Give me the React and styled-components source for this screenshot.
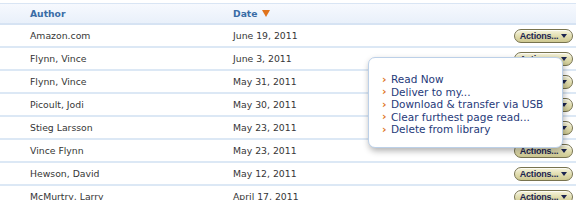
import React from "react";
import styled, { createGlobalStyle } from "styled-components";

const Global = createGlobalStyle`
  html, body { margin: 0; padding: 0; background: #fff; }
  body { font-family: "DejaVu Sans", Verdana, sans-serif; }
`;

const Page = styled.div`
  position: relative;
  width: 576px;
  height: 200px;
  overflow: hidden;
  padding-top: 3px;
  box-sizing: border-box;
`;

const Grid = styled.div`
  display: grid;
  grid-template-columns: 233px 1fr 80px;
`;

const Header = styled(Grid)`
  height: 19px;
  border-top: 1px solid #d9e5f4;
  border-bottom: 2px solid #d6e3f3;
  background: linear-gradient(#f6f9fe, #e9f0fa);
  align-items: center;
`;

const HeadCell = styled.div`
  padding-left: ${(p) => p.$pl || 0}px;
  font-weight: bold;
  font-size: 9.2px;
  color: #3a6ca6;
  display: flex;
  align-items: center;
  gap: 5px;
`;

const SortArrow = styled.span`
  width: 0;
  height: 0;
  border-left: 4px solid transparent;
  border-right: 4px solid transparent;
  border-top: 7px solid #e0731c;
`;

const Row = styled(Grid)`
  height: 21px;
  border-bottom: 2px solid #dce8f5;
  align-items: center;
  font-size: 9.3px;
  color: #363636;
`;

const Cell = styled.div`
  padding-left: ${(p) => p.$pl || 0}px;
  white-space: nowrap;
`;

const ActionCell = styled.div`
  display: flex;
  justify-content: flex-end;
  padding-right: 3px;
`;

const ActionButton = styled.div`
  width: 59px;
  height: 14px;
  box-sizing: border-box;
  border: 1px solid #77734f;
  border-radius: 7px;
  background: linear-gradient(#f6f4de, #e2deb0 50%, #cdc891);
  box-shadow: inset 0 1px 0 rgba(255, 255, 255, 0.7);
  display: flex;
  align-items: center;
  justify-content: center;
  gap: 3px;
  font-family: "Liberation Sans", Arial, sans-serif;
  font-weight: bold;
  font-size: 9px;
  color: #1c2450;
  letter-spacing: -0.2px;
`;

const Caret = styled.span`
  width: 0;
  height: 0;
  border-left: 3px solid transparent;
  border-right: 3px solid transparent;
  border-top: 4px solid #1c2450;
`;

const Popup = styled.div`
  position: absolute;
  left: 368px;
  top: 57px;
  width: 195px;
  height: 91px;
  box-sizing: border-box;
  background: #fff;
  border: 1px solid #bcd0e8;
  border-radius: 7px;
  box-shadow: 1px 3px 6px rgba(0, 0, 0, 0.3);
  padding: 15px 0 0 13px;
`;

const Item = styled.div`
  display: flex;
  align-items: center;
  height: 12.5px;
  font-size: 10.5px;
  color: #1f3a7a;
  white-space: nowrap;
`;

const Bullet = styled.span`
  color: #e0731c;
  font-weight: bold;
  font-size: 11px;
  width: 9px;
  line-height: 1;
`;

const rows = [
  ["Amazon.com", "June 19, 2011"],
  ["Flynn, Vince", "June 3, 2011"],
  ["Flynn, Vince", "May 31, 2011"],
  ["Picoult, Jodi", "May 30, 2011"],
  ["Stieg Larsson", "May 23, 2011"],
  ["Vince Flynn", "May 23, 2011"],
  ["Hewson, David", "May 12, 2011"],
  ["McMurtry, Larry", "April 17, 2011"],
];

const items = [
  "Read Now",
  "Deliver to my...",
  "Download & transfer via USB",
  "Clear furthest page read...",
  "Delete from library",
];

export default function App() {
  return (
    <Page>
      <Global />
      <Header>
        <HeadCell $pl={30}>Author</HeadCell>
        <HeadCell>
          Date <SortArrow />
        </HeadCell>
        <div />
      </Header>
      {rows.map(([a, d], i) => (
        <Row key={i}>
          <Cell $pl={30}>{a}</Cell>
          <Cell>{d}</Cell>
          <ActionCell>
            <ActionButton>
              Actions... <Caret />
            </ActionButton>
          </ActionCell>
        </Row>
      ))}
      <Popup>
        {items.map((t) => (
          <Item key={t}>
            <Bullet>›</Bullet>
            {t}
          </Item>
        ))}
      </Popup>
    </Page>
  );
}
